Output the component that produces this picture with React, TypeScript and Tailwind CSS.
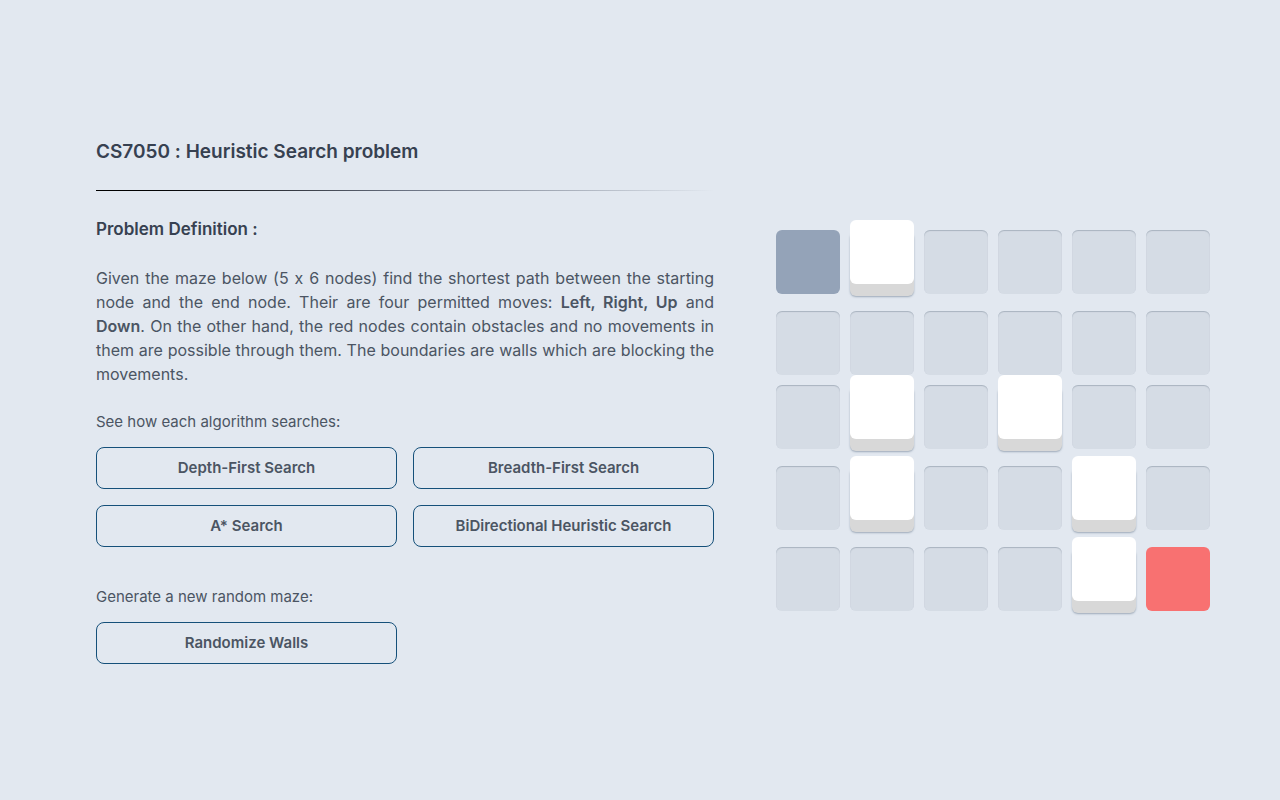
// 0 = empty, 1 = wall, 2 = start, 3 = end
const maze = [
  [2, 1, 0, 0, 0, 0],
  [0, 0, 0, 0, 0, 0],
  [0, 1, 0, 1, 0, 0],
  [0, 1, 0, 0, 1, 0],
  [0, 0, 0, 0, 1, 3],
];

function Cell({ kind }: { kind: number }) {
  if (kind === 1) {
    return (
      <div className="h-16 w-16 -translate-y-[10px] rounded-md bg-white shadow-[0_12px_0_#d8d8d8,0_13px_2px_rgba(100,116,139,0.55)]" />
    );
  }
  if (kind === 2) return <div className="h-16 w-16 rounded-md bg-[#94a3b8]" />;
  if (kind === 3) return <div className="h-16 w-16 rounded-md bg-[#f87171]" />;
  return <div className="h-16 w-16 rounded-md bg-[#d5dce5] shadow-[inset_0_1px_1px_rgba(71,85,105,0.3)]" />;
}

function OutlineButton({ label }: { label: string }) {
  return (
    <button
      type="button"
      className="h-[42px] w-full rounded-lg border border-[#15507a] text-[15px] font-semibold text-[#4b5563]"
    >
      {label}
    </button>
  );
}

export default function App() {
  return (
    <div className="min-h-screen bg-[#e2e8f0] font-['Inter','Noto_Sans',sans-serif] [font-feature-settings:'calt'_0]">
      <div className="flex gap-[62px] px-[96px] pt-[138px]">
        {/* Left column */}
        <div className="w-[618px] shrink-0">
          <h1 className="text-[19px] leading-7 font-semibold text-[#374151]">CS7050 : Heuristic Search problem</h1>
          <div className="mt-6 h-px w-full bg-gradient-to-r from-black via-gray-500 to-transparent" />

          <h2 className="mt-[26px] text-[17px] leading-6 font-semibold text-[#374151]">Problem Definition :</h2>
          <p className="mt-[25px] text-justify text-[16px] leading-6 text-[#4b5563]">
            Given the maze below (5 x 6 nodes) find the shortest path between the starting node and the end node.
            Their are four permitted moves: <b className="font-semibold">Left, Right, Up</b> and{' '}
            <b className="font-semibold">Down</b>. On the other hand, the red nodes contain obstacles and no movements
            in them are possible through them. The boundaries are walls which are blocking the movements.
          </p>

          <p className="mt-6 text-[15px] leading-6 font-normal text-[#4b5563]">See how each algorithm searches:</p>
          <div className="mt-[13px] grid grid-cols-2 gap-4">
            <OutlineButton label="Depth-First Search" />
            <OutlineButton label="Breadth-First Search" />
            <OutlineButton label="A* Search" />
            <OutlineButton label="BiDirectional Heuristic Search" />
          </div>

          <p className="mt-[38px] text-[15px] leading-6 font-normal text-[#4b5563]">Generate a new random maze:</p>
          <div className="mt-[13px] w-[301px]">
            <OutlineButton label="Randomize Walls" />
          </div>
        </div>

        {/* Maze */}
        <div className="mt-[92px] flex flex-col gap-[10px]">
          {maze.map((row, r) => (
            <div key={r} className={row.includes(1) ? 'flex gap-[10px] pb-[7px]' : 'flex gap-[10px]'}>
              {row.map((c, i) => (
                <Cell key={i} kind={c} />
              ))}
            </div>
          ))}
        </div>
      </div>
    </div>
  );
}
